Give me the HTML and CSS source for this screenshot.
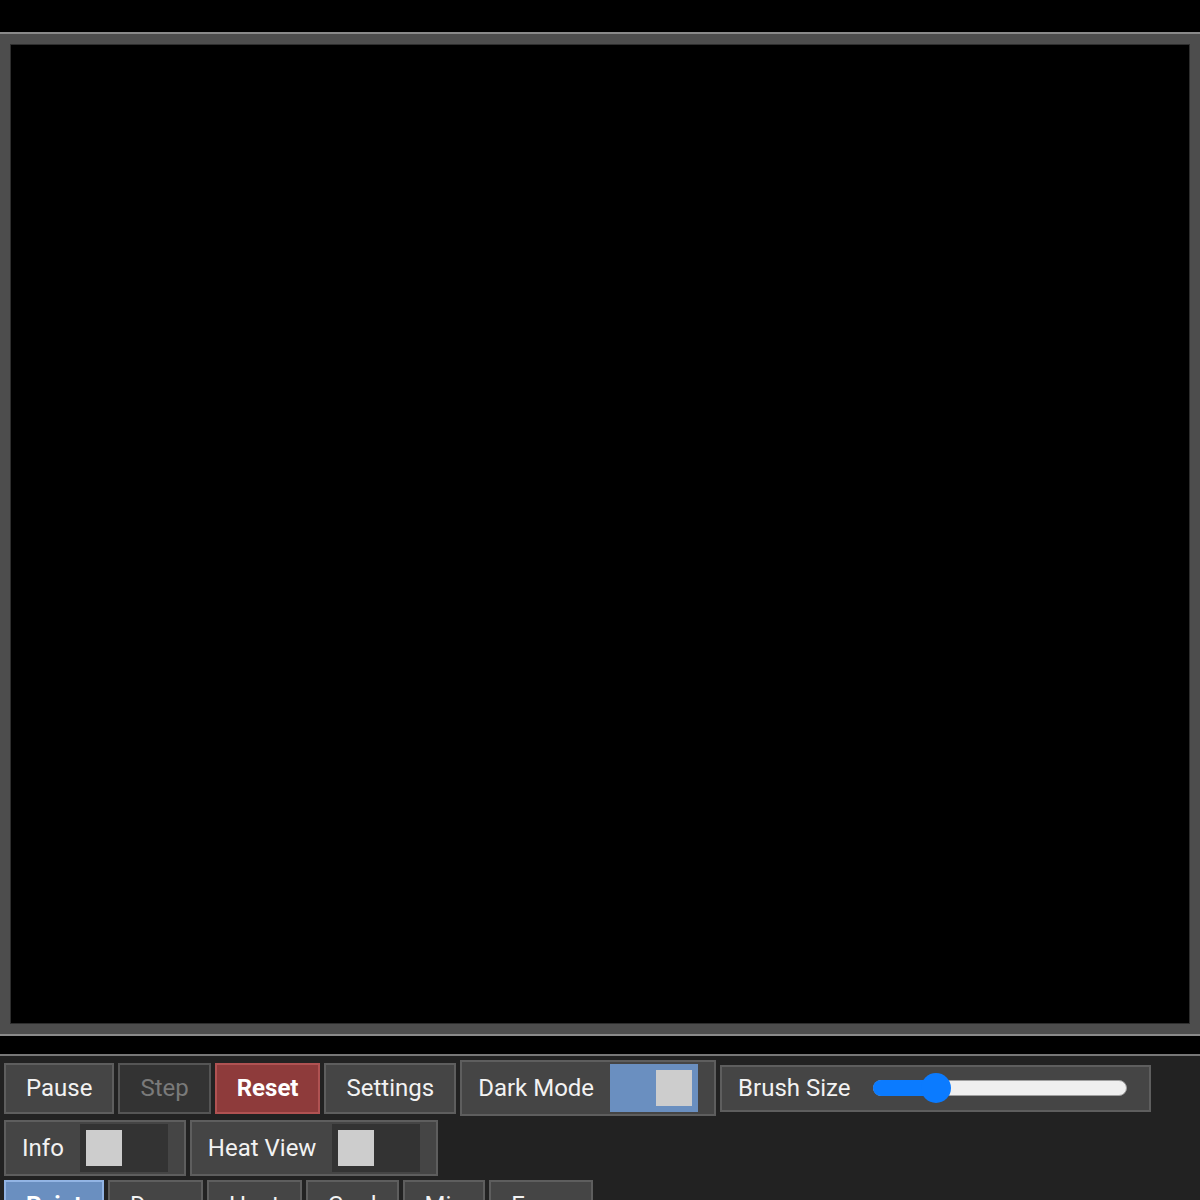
FILE: index.html
```html
<!DOCTYPE html>
<html>
<head>
<meta charset="utf-8">
<link rel="stylesheet" href="styles.css">
</head>
<body>
<div class="stage">
  <div class="canvas"></div>
</div>
<div class="panel">
  <div class="row">
    <div class="btn">Pause</div>
    <div class="btn btn-disabled">Step</div>
    <div class="btn btn-danger">Reset</div>
    <div class="btn">Settings</div>
    <div class="opt">
      <span class="opt-label">Dark Mode</span>
      <span class="toggle toggle-on"><span class="knob"></span></span>
    </div>
    <div class="opt opt-slider">
      <span class="opt-label">Brush Size</span>
      <span class="slider">
        <span class="slider-fill" style="width: 62px"></span>
        <span class="slider-thumb" style="left: 47px"></span>
      </span>
    </div>
  </div>
  <div class="row">
    <div class="opt">
      <span class="opt-label">Info</span>
      <span class="toggle"><span class="knob"></span></span>
    </div>
    <div class="opt">
      <span class="opt-label">Heat View</span>
      <span class="toggle"><span class="knob"></span></span>
    </div>
  </div>
  <div class="row row-tools">
    <div class="btn btn-active">Paint</div>
    <div class="btn">Drop</div>
    <div class="btn">Heat</div>
    <div class="btn">Cool</div>
    <div class="btn">Mix</div>
    <div class="btn">Erase</div>
  </div>
</div>
</body>
</html>
```
FILE: styles.css
```css
* { box-sizing: border-box; }
html, body { margin: 0; padding: 0; }
body {
  background: #000;
  font-family: Roboto, "Liberation Sans", sans-serif;
  color: #eee;
  overflow: hidden;
  height: 1200px;
}
.stage {
  margin-top: 32px;
  border-top: 2px solid #8a8a8a;
  border-bottom: 2px solid #8a8a8a;
  background: #4d4d4d;
  padding: 10px;
}
.canvas {
  height: 980px;
  background: #000;
  border: 1px solid #2e2e2e;
}
.panel {
  margin-top: 18px;
  border-top: 2px solid #777;
  background: #222;
  padding: 4px;
  display: flex;
  flex-direction: column;
  gap: 4px;
  min-height: 200px;
}
.row {
  display: flex;
  align-items: center;
  gap: 4px;
  min-height: 56px;
}
.row-tools {
  align-items: flex-start;
}
.btn {
  border: 2px solid #5e5e5e;
  background: #454545;
  color: #f2f2f2;
  font-size: 24px;
  line-height: 27px;
  padding: 10px 20px;
  white-space: nowrap;
}
.btn-disabled {
  background: #333;
  color: #7a7a7a;
  border-color: #555;
}
.btn-danger {
  background: #8e3b3b;
  border-color: #b05252;
  color: #fff;
  font-weight: bold;
}
.btn-active {
  background: #6a8fc0;
  border-color: #92b4e4;
  color: #fff;
  font-weight: bold;
}
.opt {
  display: flex;
  align-items: center;
  gap: 16px;
  border: 2px solid #5e5e5e;
  background: #454545;
  padding: 2px 16px;
  font-size: 24px;
  color: #f2f2f2;
  white-space: nowrap;
}
.toggle {
  display: flex;
  align-items: center;
  width: 88px;
  height: 48px;
  padding: 6px;
  background: #333;
}
.toggle-on {
  background: #6a8fc0;
  justify-content: flex-end;
}
.knob {
  width: 36px;
  height: 36px;
  background: #cdcdcd;
}
.opt-slider {
  height: 47px;
  padding: 0 22px 0 16px;
  gap: 22px;
}
.slider {
  position: relative;
  display: block;
  width: 254px;
  height: 16px;
  border-radius: 8px;
  background: #efefef;
  border: 1px solid #a0a0a0;
}
.slider-fill {
  position: absolute;
  left: -1px;
  top: -1px;
  bottom: -1px;
  border-radius: 8px 0 0 8px;
  background: #0b7bff;
}
.slider-thumb {
  position: absolute;
  top: -8px;
  width: 30px;
  height: 30px;
  border-radius: 50%;
  background: #0b7bff;
}
```
